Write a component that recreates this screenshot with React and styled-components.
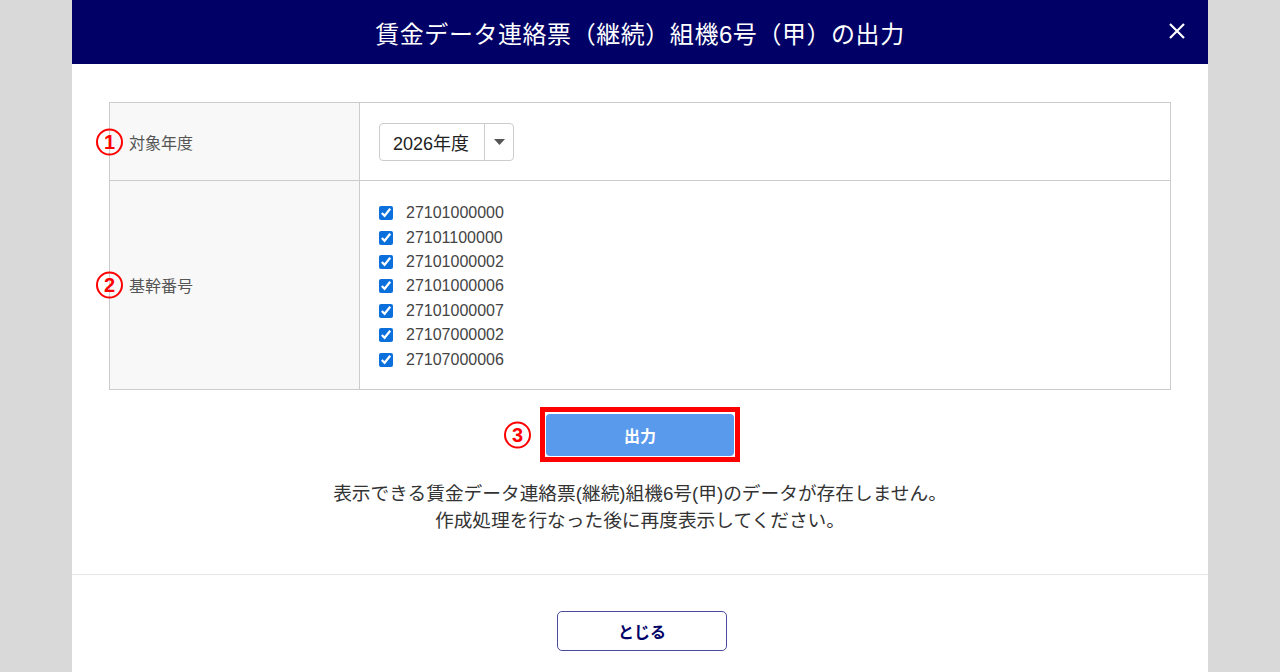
import React, { useState } from "react";
import styled, { createGlobalStyle } from "styled-components";

const GlobalStyle = createGlobalStyle`
  html, body {
    margin: 0;
    padding: 0;
    background: #d9d9d9;
    font-family: "Liberation Sans", "Noto Sans CJK JP", sans-serif;
  }
`;

const Modal = styled.div`
  width: 1136px;
  min-height: 100vh;
  margin: 0 auto;
  background: #ffffff;
`;

const Header = styled.div`
  position: relative;
  height: 64px;
  background: #000066;
  display: flex;
  align-items: center;
  justify-content: center;
`;

const Title = styled.h1`
  margin: 0;
  color: #ffffff;
  font-size: 24px;
  font-weight: normal;
  letter-spacing: 0.55px;
`;

const CloseButton = styled.button`
  position: absolute;
  right: 22px;
  top: 22px;
  width: 18px;
  height: 18px;
  padding: 0;
  border: none;
  background: transparent;
  cursor: pointer;
  display: flex;
`;

const Body = styled.div`
  padding: 38px 37px 0;
`;

const Table = styled.div`
  display: grid;
  grid-template-columns: 250px 1fr;
  border: 1px solid #cccccc;
  border-bottom: none;
`;

const LabelCell = styled.div`
  position: relative;
  display: flex;
  align-items: center;
  padding-left: 19px;
  background: #f8f8f8;
  border-right: 1px solid #cccccc;
  border-bottom: 1px solid #cccccc;
  height: ${(p) => p.h}px;
  box-sizing: border-box;
  font-size: 16px;
  color: #555555;
`;

const ValueCell = styled.div`
  display: flex;
  flex-direction: column;
  justify-content: ${(p) => (p.top ? "flex-start" : "center")};
  padding: ${(p) => (p.top ? "20px 19px 0" : "0 19px")};
  border-bottom: 1px solid #cccccc;
  height: ${(p) => p.h}px;
  box-sizing: border-box;
`;

const Marker = styled.span`
  position: absolute;
  left: ${(p) => p.left ?? -14}px;
  top: 50%;
  transform: translateY(-50%);
  width: 23px;
  height: 23px;
  border: 2px solid #ff0000;
  border-radius: 50%;
  color: #ff0000;
  font-weight: bold;
  font-size: 20px;
  line-height: 23px;
  text-align: center;
  background: transparent;
`;

const Select = styled.div`
  display: flex;
  width: 135px;
  height: 38px;
  box-sizing: border-box;
  border: 1px solid #cccccc;
  border-radius: 4px;
  background: #ffffff;
`;

const SelectValue = styled.div`
  flex: 1;
  display: flex;
  align-items: center;
  padding-left: 13px;
  font-size: 18px;
  color: #222222;
  border-right: 1px solid #cccccc;
`;

const SelectArrow = styled.div`
  width: 28px;
  display: flex;
  align-items: center;
  justify-content: center;
`;

const CheckRow = styled.label`
  display: flex;
  align-items: center;
  height: 24.4px;
  font-size: 16px;
  color: #444444;
`;

const Check = styled.input`
  width: 14px;
  height: 14px;
  margin: 0 13px 0 0;
  accent-color: #0b6fdc;
`;

const Actions = styled.div`
  display: flex;
  justify-content: center;
  margin-top: 17px;
`;

const Highlight = styled.div`
  position: relative;
  border: 5px solid #ff0000;
  padding: 2px 1px 1px;
`;

const PrimaryButton = styled.button`
  width: 188px;
  height: 42px;
  border: none;
  border-radius: 4px;
  background: #5a9aec;
  color: #ffffff;
  font-family: inherit;
  font-size: 16px;
  font-weight: bold;
  cursor: pointer;
  display: block;
`;

const Message = styled.p`
  margin: 18px 0 0;
  text-align: center;
  font-size: 18.7px;
  line-height: 27px;
  color: #333333;
`;

const Footer = styled.div`
  margin-top: 40px;
  border-top: 1px solid #e6e6e6;
  padding: 36px 0 30px 4px;
  display: flex;
  justify-content: center;
`;

const SecondaryButton = styled.button`
  width: 170px;
  height: 40px;
  box-sizing: border-box;
  border: 1.5px solid #4b4b9c;
  border-radius: 5px;
  background: #ffffff;
  color: #000066;
  font-family: inherit;
  font-size: 16px;
  font-weight: bold;
  cursor: pointer;
`;

const codes = [
  "27101000000",
  "27101100000",
  "27101000002",
  "27101000006",
  "27101000007",
  "27107000002",
  "27107000006",
];

export default function App() {
  const [checked, setChecked] = useState(codes.map(() => true));

  const toggle = (i) =>
    setChecked((prev) => prev.map((v, j) => (j === i ? !v : v)));

  return (
    <>
      <GlobalStyle />
      <Modal>
        <Header>
          <Title>賃金データ連絡票（継続）組機6号（甲）の出力</Title>
          <CloseButton aria-label="close">
            <svg width="18" height="18" viewBox="0 0 18 18">
              <path d="M2 2 L16 16 M16 2 L2 16" stroke="#fff" strokeWidth="2.2" />
            </svg>
          </CloseButton>
        </Header>
        <Body>
          <Table>
            <LabelCell h={78}>
              <Marker>1</Marker>
              対象年度
            </LabelCell>
            <ValueCell h={78}>
              <Select>
                <SelectValue>2026年度</SelectValue>
                <SelectArrow>
                  <svg width="11" height="6" viewBox="0 0 11 6">
                    <path d="M0 0 H11 L5.5 6 Z" fill="#555" />
                  </svg>
                </SelectArrow>
              </Select>
            </ValueCell>
            <LabelCell h={209}>
              <Marker>2</Marker>
              基幹番号
            </LabelCell>
            <ValueCell h={209} top>
              {codes.map((c, i) => (
                <CheckRow key={c}>
                  <Check
                    type="checkbox"
                    checked={checked[i]}
                    onChange={() => toggle(i)}
                  />
                  {c}
                </CheckRow>
              ))}
            </ValueCell>
          </Table>
          <Actions>
            <Highlight>
              <Marker left={-41}>3</Marker>
              <PrimaryButton>出力</PrimaryButton>
            </Highlight>
          </Actions>
          <Message>
            表示できる賃金データ連絡票(継続)組機6号(甲)のデータが存在しません。
            <br />
            作成処理を行なった後に再度表示してください。
          </Message>
        </Body>
        <Footer>
          <SecondaryButton>とじる</SecondaryButton>
        </Footer>
      </Modal>
    </>
  );
}
